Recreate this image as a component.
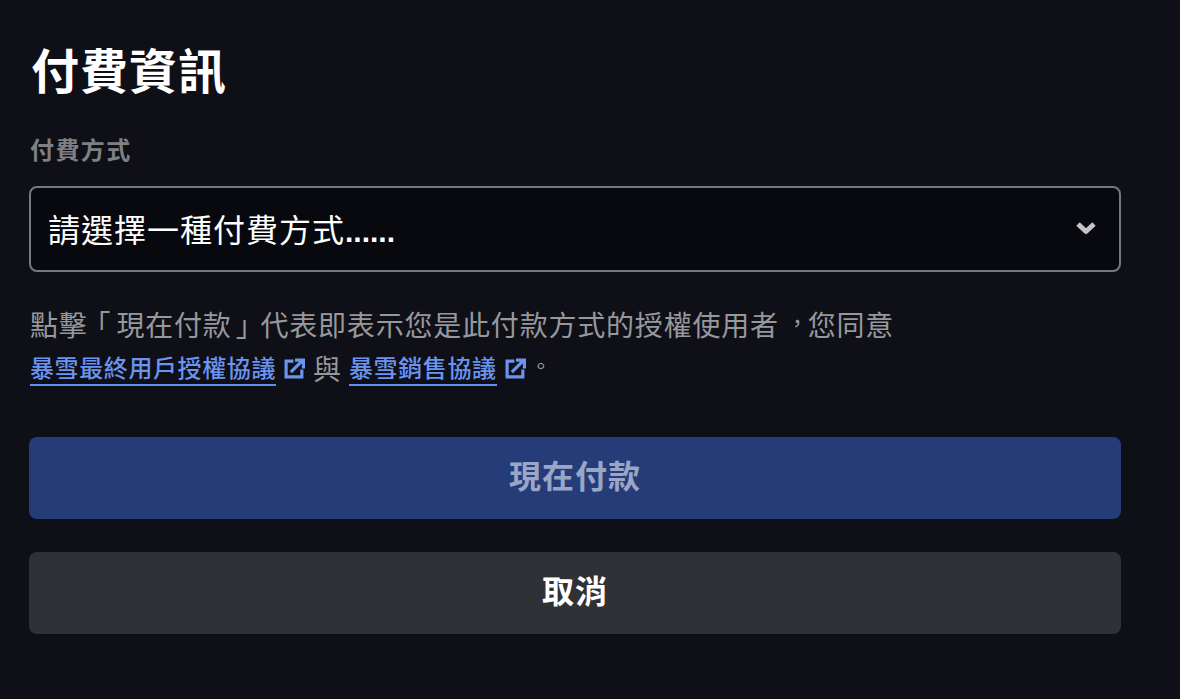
<main class="payment" lang="zh-TW">
  <h1 class="title">付費資訊</h1>

  <label class="field-label" for="method">付費方式</label>
  <div class="select" id="method">
    <span class="select-text">請選擇一種付費方式<span class="dots">......</span></span>
    <svg class="chevron" viewBox="0 0 22 16" aria-hidden="true">
      <path d="M3 4 11 11.5 19 4" fill="none" stroke="currentColor" stroke-width="5" stroke-linejoin="round" />
    </svg>
  </div>

  <div class="legal">
    <p class="legal-line">點擊<span class="mark open">「</span>現在付款<span class="mark close">」</span>代表即表示您是此付款方式的授權使用者<span class="mark comma">，</span>您同意</p>
    <p class="legal-links">
      <a class="link" href="#eula">暴雪最終用戶授權協議</a>
      <svg class="external" viewBox="0 0 20 20" aria-hidden="true">
        <path d="M9 3H2V18H17V11" fill="none" stroke="currentColor" stroke-width="3" />
        <path d="M6.5 13.5 17 3M10.5 2H18.5V10" fill="none" stroke="currentColor" stroke-width="3" />
      </svg>
      <span class="joiner">與</span>
      <a class="link" href="#sale">暴雪銷售協議</a>
      <svg class="external" viewBox="0 0 20 20" aria-hidden="true">
        <path d="M9 3H2V18H17V11" fill="none" stroke="currentColor" stroke-width="3" />
        <path d="M6.5 13.5 17 3M10.5 2H18.5V10" fill="none" stroke="currentColor" stroke-width="3" />
      </svg>
      <span class="stop">。</span>
    </p>
  </div>

  <div class="actions">
    <button class="btn primary" disabled>現在付款</button>
    <button class="btn secondary">取消</button>
  </div>
</main>

<style>
  :global(body) {
    background: #0f1017;
  }

  .payment {
    box-sizing: border-box;
    width: 1180px;
    height: 699px;
    padding: 38px 59px 0 29px;
    background: #0f1017;
    font-family: "Noto Sans CJK TC", "Liberation Sans", sans-serif;
    overflow: hidden;
  }

  .title {
    margin: 0 0 0 2px;
    font-size: 48px;
    line-height: 60px;
    font-weight: 700;
    letter-spacing: 1px;
    color: #fff;
  }

  .field-label {
    display: block;
    margin: 34px 0 0 1px;
    font-size: 24px;
    line-height: 34px;
    font-weight: 700;
    letter-spacing: 1.4px;
    color: #7f8084;
  }

  .select {
    box-sizing: border-box;
    display: flex;
    align-items: center;
    justify-content: space-between;
    height: 86px;
    margin-top: 20px;
    padding: 0 22px 3px 17px;
    background: #08090e;
    border: 2px solid #77787d;
    border-radius: 8px;
  }

  .select-text {
    font-size: 32px;
    letter-spacing: 1px;
    color: #fff;
  }

  .dots {
    font-family: "Liberation Sans", sans-serif;
    font-size: 30px;
    font-weight: 700;
    letter-spacing: 0;
  }

  .chevron {
    width: 22px;
    height: 16px;
    color: #c4c4c6;
  }

  .legal {
    margin-top: 31px;
    padding-left: 1px;
    color: #97989c;
  }

  .legal-line {
    margin: 0;
    font-size: 28px;
    line-height: 43px;
    letter-spacing: 0.8px;
  }

  .mark {
    font-feature-settings: "halt";
    line-height: 1;
  }

  .open {
    margin: 0 5px 0 9px;
  }

  .close {
    margin: 0 10px 0 4px;
  }

  .comma {
    margin: 0 4px 0 13px;
    font-size: 22px;
    vertical-align: 5px;
  }

  .legal-links {
    display: flex;
    align-items: center;
    margin: 0;
    height: 44px;
  }

  .link {
    color: #6a94ef;
    font-size: 24px;
    line-height: 34px;
    font-weight: 500;
    letter-spacing: 0.6px;
    text-decoration: none;
    border-bottom: 2px solid #5f8ff0;
  }

  .external {
    width: 21px;
    height: 21px;
    margin-left: 8px;
    color: #6a94ef;
  }

  .joiner {
    margin: 0 8px 0 8px;
    font-size: 28px;
  }

  .stop {
    font-size: 22px;
    margin-left: 4px;
    transform: translateY(-4px);
  }

  .actions {
    display: flex;
    flex-direction: column;
    gap: 33px;
    margin-top: 47px;
  }

  .btn {
    height: 82px;
    padding: 0 0 8px;
    border: 0;
    border-radius: 8px;
    font-family: inherit;
    font-size: 32px;
    font-weight: 700;
    letter-spacing: 1px;
  }

  .primary {
    background: #253c79;
    color: #9aa6c6;
  }

  .secondary {
    background: #303136;
    color: #fff;
  }
</style>
